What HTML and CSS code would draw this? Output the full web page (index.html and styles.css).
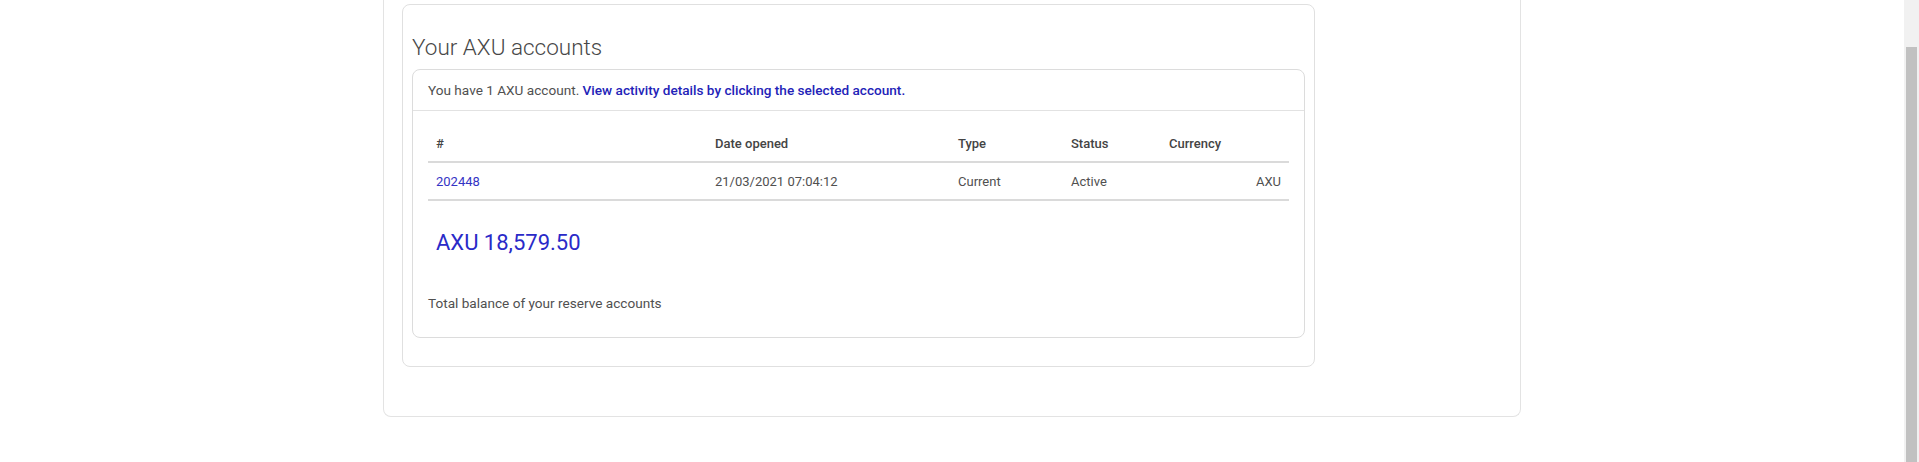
FILE: index.html
```html
<!DOCTYPE html>
<html lang="en">

<head>
  <meta charset="UTF-8">
  <meta name="viewport" content="width=device-width, initial-scale=1.0">
  <title>AXU accounts</title>
  <link rel="stylesheet" href="styles.css">
</head>

<body>
  <div class="page">
    <div class="panel">
      <div class="accounts">
        <h2>Your AXU accounts</h2>
        <div class="card">
          <p class="card-head">
            You have 1 AXU account. <a href="#" class="hint">View activity details by clicking the selected account.</a>
          </p>
          <div class="card-body">
            <table>
              <thead>
                <tr>
                  <th class="c-num">#</th>
                  <th class="c-date">Date opened</th>
                  <th class="c-type">Type</th>
                  <th class="c-status">Status</th>
                  <th class="c-cur">Currency</th>
                </tr>
              </thead>
              <tbody>
                <tr>
                  <td><a href="#" class="acc">202448</a></td>
                  <td>21/03/2021 07:04:12</td>
                  <td>Current</td>
                  <td>Active</td>
                  <td class="right">AXU</td>
                </tr>
              </tbody>
            </table>
            <div class="balance">AXU 18,579.50</div>
            <p class="note">Total balance of your reserve accounts</p>
          </div>
        </div>
      </div>
    </div>
  </div>
  <div class="scrollbar">
    <div class="thumb"></div>
  </div>
</body>

</html>
```

FILE: styles.css
```css
* {
  box-sizing: border-box;
  margin: 0;
  padding: 0;
}
body {
  display: flex;
  height: 462px;
  overflow: hidden;
  background: #fff;
  color: #505050;
  font-family: Roboto, "Liberation Sans", sans-serif;
  font-size: 13px;
}
.page {
  flex: 1;
  display: flex;
  justify-content: center;
}
.panel {
  width: 1138px;
  height: 417px;
  padding: 4px 18px 0;
  border: 1px solid #e3e3e3;
  border-top: 0;
  border-radius: 0 0 8px 8px;
}
.accounts {
  width: 913px;
  padding: 0 9px;
  border: 1px solid #e0e0e0;
  border-radius: 8px;
  height: 363px;
}
h2 {
  font-weight: 300;
  font-size: 22.5px;
  color: #474747;
  padding: 27px 0 7px 0;
  line-height: 30px;
}
.card {
  border: 1px solid #dcdcdc;
  border-radius: 8px;
  height: 269px;
}
.card-head {
  height: 41px;
  line-height: 41px;
  padding-left: 15px;
  border-bottom: 1px solid #e2e2e2;
  font-size: 13.6px;
}
a {
  text-decoration: none;
}
.hint {
  color: #2323b8;
  font-weight: 500;
}
.card-body {
  padding: 15px 15px 0;
}
table {
  width: 100%;
  border-collapse: collapse;
}
th {
  text-align: left;
  font-weight: 500;
  color: #444;
  height: 36px;
  padding: 0 8px;
  border-bottom: 2px solid #dadada;
}
td {
  height: 38px;
  padding: 0 8px;
  border-bottom: 2px solid #dadada;
}
.c-num { width: 279px; }
.c-date { width: 243px; }
.c-type { width: 113px; }
.c-status { width: 98px; }
.right {
  text-align: right;
}
.acc {
  color: #3434c4;
}
.balance {
  padding: 28px 0 0 8px;
  font-size: 22px;
  color: #2a2ac8;
  line-height: 28px;
}
.note {
  padding-top: 38px;
  font-size: 13.6px;
}
.scrollbar {
  width: 15px;
  background: #f1f1f1;
  padding: 47px 2px 0;
}
.thumb {
  background: #c1c1c1;
  height: 100%;
}
```
